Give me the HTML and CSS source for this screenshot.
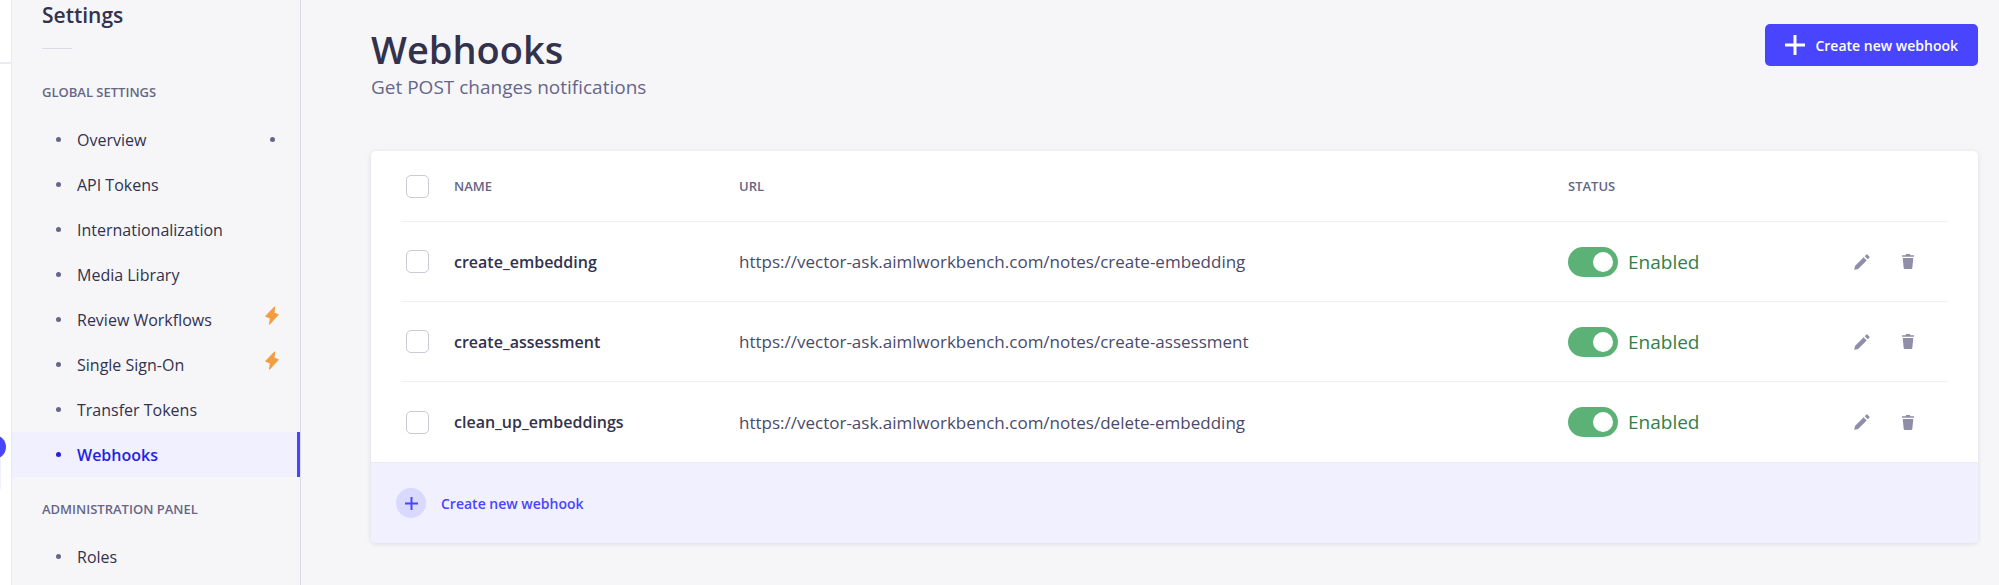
FILE: index.html
```html
<!DOCTYPE html>
<html lang="en">
<head>
<meta charset="utf-8">
<title>Webhooks</title>
<link rel="stylesheet" href="styles.css">
</head>
<body>
<svg class="sprite" aria-hidden="true">
  <symbol id="bolt" viewBox="0 0 14 19"><path stroke="currentColor" stroke-width="1" stroke-linejoin="round" d="M9.700.7.6 10.200 5.400 12.200 4.500 18.300 13.400 8.700 9 6.900z"/></symbol>
  <symbol id="plus" viewBox="0 0 20 20"><path d="M8.500 0h3v8.500H20v3h-8.500V20h-3v-8.500H0v-3h8.500z"/></symbol>
  <symbol id="pencil" viewBox="0 0 16 16"><path d="M9.600 3.300 12.700 6.400 4.100 15 .8 15.700Q.2 15.800.3 15.200L1 11.900zM10.700 2.200 12.200.7Q12.900 0 13.600.7L15.300 2.400Q16 3.100 15.300 3.800L13.800 5.300z"/></symbol>
  <symbol id="trash" viewBox="0 0 12 15"><path d="M0 1.200h3.500L4.200 0h3.600l.7 1.200H12v1.500H0zM.7 3.900h10.600l-1 10.100q-.1 1-1.100 1H2.800q-1 0-1.100-1z"/></symbol>
</svg>
<div class="app">
  <div class="rail"><div class="rail-head"></div><span class="rail-item"></span><span class="rail-badge"></span></div>
  <nav class="sidebar" aria-label="Settings">
    <h2 class="sidebar-title">Settings</h2>
    <hr class="sidebar-rule">
    <h3 class="group">Global Settings</h3>
    <ul class="links">
      <li><a class="link" href="#">Overview<span class="dot"></span></a></li>
      <li><a class="link" href="#">API Tokens</a></li>
      <li><a class="link" href="#">Internationalization</a></li>
      <li><a class="link" href="#">Media Library</a></li>
      <li><a class="link" href="#">Review Workflows<svg class="bolt"><use href="#bolt"/></svg></a></li>
      <li><a class="link" href="#">Single Sign-On<svg class="bolt"><use href="#bolt"/></svg></a></li>
      <li><a class="link" href="#">Transfer Tokens</a></li>
      <li><a class="link active" href="#" aria-current="page">Webhooks</a></li>
    </ul>
    <h3 class="group">Administration Panel</h3>
    <ul class="links">
      <li><a class="link" href="#">Roles</a></li>
    </ul>
  </nav>
  <main class="main">
    <header class="header">
      <div>
        <h1 class="title">Webhooks</h1>
        <p class="subtitle">Get POST changes notifications</p>
      </div>
      <button class="primary" type="button"><svg class="primary-icon"><use href="#plus"/></svg>Create new webhook</button>
    </header>
    <section class="card">
      <div class="table-wrap">
        <table class="table">
          <colgroup><col class="col-check"><col class="col-name"><col><col class="col-status"><col class="col-actions"></colgroup>
          <thead>
            <tr>
              <th><input class="check" type="checkbox" aria-label="Select all"></th>
              <th>Name</th><th>URL</th><th>Status</th><th></th>
            </tr>
          </thead>
          <tbody>
            <tr>
              <td><input class="check" type="checkbox" aria-label="Select create_embedding"></td>
              <td class="name">create_embedding</td>
              <td>https://vector-ask.aimlworkbench.com/notes/create-embedding</td>
              <td><label class="status"><input class="switch" type="checkbox" role="switch" checked>Enabled</label></td>
              <td><div class="actions"><button class="icon-btn" type="button" aria-label="Edit"><svg class="pencil"><use href="#pencil"/></svg></button><button class="icon-btn" type="button" aria-label="Delete"><svg class="trash"><use href="#trash"/></svg></button></div></td>
            </tr>
            <tr>
              <td><input class="check" type="checkbox" aria-label="Select create_assessment"></td>
              <td class="name">create_assessment</td>
              <td>https://vector-ask.aimlworkbench.com/notes/create-assessment</td>
              <td><label class="status"><input class="switch" type="checkbox" role="switch" checked>Enabled</label></td>
              <td><div class="actions"><button class="icon-btn" type="button" aria-label="Edit"><svg class="pencil"><use href="#pencil"/></svg></button><button class="icon-btn" type="button" aria-label="Delete"><svg class="trash"><use href="#trash"/></svg></button></div></td>
            </tr>
            <tr>
              <td><input class="check" type="checkbox" aria-label="Select clean_up_embeddings"></td>
              <td class="name">clean_up_embeddings</td>
              <td>https://vector-ask.aimlworkbench.com/notes/delete-embedding</td>
              <td><label class="status"><input class="switch" type="checkbox" role="switch" checked>Enabled</label></td>
              <td><div class="actions"><button class="icon-btn" type="button" aria-label="Edit"><svg class="pencil"><use href="#pencil"/></svg></button><button class="icon-btn" type="button" aria-label="Delete"><svg class="trash"><use href="#trash"/></svg></button></div></td>
            </tr>
          </tbody>
        </table>
      </div>
      <button class="footer" type="button"><span class="footer-icon"><svg class="footer-plus"><use href="#plus"/></svg></span>Create new webhook</button>
    </section>
  </main>
</div>
</body>
</html>
```
FILE: styles.css
```css
*, *::before, *::after { box-sizing: border-box; }
body {
  margin: 0;
  background: #f6f6f9;
  color: #4a4a6a;
  font-family: "Segoe UI", "Open Sans", "Noto Sans", sans-serif;
  font-size: 17px;
}
h1, h2, h3, p, ul { margin: 0; padding: 0; }
button { font: inherit; border: 0; padding: 0; cursor: pointer; }
svg { fill: currentColor; flex: none; }
.sprite { display: none; }
.app { display: flex; height: 100vh; overflow: hidden; }

.rail { position: relative; flex: none; width: 12px; background: #fff; border-right: 1px solid #eaeaef; }
.rail-head { height: 64px; border-bottom: 2px solid #eaeaef; }
.rail-item { position: absolute; left: 0; top: 447px; width: 1px; height: 42px; background: #f0f0ff; }
.rail-badge { position: absolute; left: -18px; top: 435px; width: 24px; height: 24px; border-radius: 50%; background: #4945ff; }

.sidebar { flex: none; width: 289px; border-right: 1px solid #dcdce4; }
.sidebar-title { padding: 0 30px; color: #32324d; font-size: 21px; line-height: 30px; font-weight: 600; }
.sidebar-rule { width: 30px; height: 1px; margin: 18px 30px 28px; border: 0; background: #dcdce4; }
.group { padding: 0 30px; color: #666687; font-size: 13px; line-height: 30px; font-weight: 600; text-transform: uppercase; }
.links { list-style: none; margin: 10px 0 17px; font-size: 16px; }
.link { display: flex; align-items: center; height: 45px; padding: 0 25px 0 44px; color: #32324d; text-decoration: none; }
.link::before { content: ""; width: 5px; height: 5px; margin-right: 16px; border-radius: 50%; background: #666687; }
.dot { width: 5px; height: 5px; margin: 0 0 0 auto; border-radius: 50%; background: #666687; }
.bolt { width: 14px; height: 19px; margin: 0 -4px 8px auto; color: #f29d41; }
.active { background: #f0f0ff; border-right: 3px solid #4945ff; color: #271fe0; font-weight: 600; }
.active::before { background: #271fe0; }

.main { flex: 1; min-width: 0; padding: 24px 21px 0 70px; }
.header { display: flex; justify-content: space-between; align-items: flex-start; margin-bottom: 50px; }
.title { color: #32324d; font-size: 38px; line-height: 50px; font-weight: 600; }
.subtitle { color: #666687; font-size: 19px; line-height: 27px; }
.primary { display: flex; align-items: center; gap: 10px; height: 42px; padding: 0 20px; border-radius: 5px; background: #4945ff; color: #fff; font-size: 14px; font-weight: 600; }
.primary-icon { width: 20px; height: 20px; }

.card { border-radius: 5px; background: #fff; box-shadow: 0 1px 5px rgba(33, 33, 52, .12); }
.table-wrap { padding: 0 30px; }
.table { width: 100%; table-layout: fixed; border-collapse: separate; border-spacing: 0; }
.col-check { width: 53px; }
.col-name { width: 285px; }
.col-status { width: 240px; }
.col-actions { width: 140px; }
.table th, .table td { padding: 0; text-align: left; white-space: nowrap; border-bottom: 1px solid #f0f0f5; }
.table th { height: 71px; color: #666687; font-size: 13px; font-weight: 600; text-transform: uppercase; }
.table td { height: 80px; }
.table tbody tr:last-child td { border-bottom: 0; }
.table .name { color: #32324d; font-size: 16px; font-weight: 600; }
.check { appearance: none; display: block; width: 23px; height: 23px; margin: 0 5px; border: 1px solid #c9c9d8; border-radius: 5px; background: #fff; }
.status { display: flex; align-items: center; gap: 10px; color: #328048; font-size: 19px; }
.switch { appearance: none; display: flex; justify-content: flex-end; align-items: center; width: 50px; height: 30px; margin: 0; padding: 5px; border-radius: 15px; background: #5cb176; }
.switch::before { content: ""; width: 20px; height: 20px; border-radius: 50%; background: #fff; }
.actions { display: flex; justify-content: flex-end; gap: 6px; padding-right: 20px; }
.icon-btn { display: grid; place-items: center; width: 40px; height: 40px; background: none; color: #8e8ea9; }
.pencil { width: 16px; height: 16px; }
.trash { width: 12px; height: 15px; }

.footer { display: flex; align-items: center; gap: 15px; width: 100%; height: 81px; padding: 0 25px; border-top: 1px solid #eaeaef; border-radius: 0 0 5px 5px; background: #f0f0ff; color: #4945ff; font-size: 14px; font-weight: 600; }
.footer-icon { display: grid; place-items: center; width: 30px; height: 30px; border-radius: 50%; background: #d9d8ff; }
.footer-plus { width: 13px; height: 13px; }
```
